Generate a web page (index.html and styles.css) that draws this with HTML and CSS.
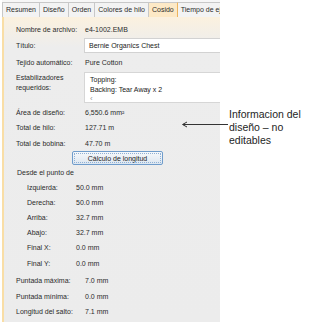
FILE: index.html
```html
<!DOCTYPE html>
<html lang="es">
<head>
    <meta charset="UTF-8">
    <title>Cosido</title>
    <link rel="stylesheet" href="styles.css">
</head>
<body>
    <div class="panel">
        <!-- Tab strip -->
        <div class="tabs">
            <div class="tab">Resumen</div>
            <div class="tab">Diseño</div>
            <div class="tab">Orden</div>
            <div class="tab">Colores de hilo</div>
            <div class="tab active">Cosido</div>
            <div class="tab last">Tiempo de ejecución</div>
        </div>

        <div class="pane">
            <div class="row h16">
                <span class="label">Nombre de archivo:</span>
                <span class="value">e4-1002.EMB</span>
            </div>
            <div class="row h17">
                <span class="label">Título:</span>
                <div class="input">Bernie Organics Chest</div>
            </div>
            <div class="row h16">
                <span class="label">Tejido automático:</span>
                <span class="value">Pure Cotton</span>
            </div>
            <div class="row stab">
                <span class="label">Estabilizadores<br>requeridos:</span>
                <div class="listbox">
                    <div>Topping:</div>
                    <div>Backing: Tear Away x 2</div>
                    <div class="scroll">&lsaquo;</div>
                </div>
            </div>
            <div class="row h16">
                <span class="label">Área de diseño:</span>
                <span class="value">6,550.6 mm²</span>
            </div>
            <div class="row h15">
                <span class="label">Total de hilo:</span>
                <span class="value">127.71 m</span>
            </div>
            <div class="row h16">
                <span class="label">Total de bobina:</span>
                <span class="value">47.70 m</span>
            </div>
            <div class="button-row">
                <button class="btn">Cálculo de longitud</button>
            </div>
            <div class="row h15 from">Desde el punto de</div>
            <div class="row h15 sub">
                <span class="label">Izquierda:</span>
                <span class="value">50.0 mm</span>
            </div>
            <div class="row h15 sub">
                <span class="label">Derecha:</span>
                <span class="value">50.0 mm</span>
            </div>
            <div class="row h15 sub">
                <span class="label">Arriba:</span>
                <span class="value">32.7 mm</span>
            </div>
            <div class="row h15 sub">
                <span class="label">Abajo:</span>
                <span class="value">32.7 mm</span>
            </div>
            <div class="row h15 sub">
                <span class="label">Final X:</span>
                <span class="value">0.0 mm</span>
            </div>
            <div class="row h17 sub">
                <span class="label">Final Y:</span>
                <span class="value">0.0 mm</span>
            </div>
            <div class="row h16">
                <span class="label">Puntada máxima:</span>
                <span class="value">7.0 mm</span>
            </div>
            <div class="row h16">
                <span class="label">Puntada mínima:</span>
                <span class="value">0.0 mm</span>
            </div>
            <div class="row h15">
                <span class="label">Longitud del salto:</span>
                <span class="value">7.1 mm</span>
            </div>
        </div>
    </div>

    <!-- Callout note -->
    <div class="callout">
        <svg class="arrow" width="46" height="7" viewBox="0 0 46 7">
            <line x1="1" y1="3.5" x2="46" y2="3.5" stroke="#333" stroke-width="1"/>
            <path d="M5 1 L0.5 3.5 L5 6" fill="none" stroke="#333" stroke-width="1"/>
        </svg>
        <div class="note">Informacion del<br>diseño – no<br>editables</div>
    </div>
</body>
</html>
```

FILE: styles.css
```css
* {
    margin: 0;
    padding: 0;
    box-sizing: border-box;
}

body {
    font-family: 'Liberation Sans', Arial, sans-serif;
    background: #fff;
    display: flex;
    align-items: flex-start;
}

/* Dialog panel */
.panel {
    width: 218px;
    margin-left: 2px;
    height: 322px;
    display: flex;
    flex-direction: column;
    font-size: 7px;
    color: #2b2b2b;
}

.tabs {
    display: flex;
    height: 17px;
    padding-top: 2px;
    background: #f7f7f7;
    overflow: hidden;
}

.tab {
    flex-shrink: 0;
    padding: 0 3px;
    height: 15px;
    line-height: 13px;
    border: 1px solid #c8c8c8;
    border-bottom: none;
    border-left: none;
    background: #f3f3f3;
    white-space: nowrap;
}

.tab:first-child {
    border-left: 1px solid #c8c8c8;
}

.tab.active {
    background: #fde9c6;
    border-right: 1px solid #eeb45c;
}

.pane {
    flex: 1;
    background: linear-gradient(to bottom, #fbf1df 0, #ededed 30px, #ececec 100%);
    border-left: 2px solid #f9dea6;
    padding-top: 4px;
}

.row {
    display: flex;
    align-items: center;
    padding-left: 12px;
}

.h15 { height: 15px; }
.h16 { height: 16px; }
.h17 { height: 17px; }

.label {
    width: 68px;
    flex-shrink: 0;
}

.value {
    padding-left: 1px;
}

.input {
    flex: 1;
    height: 15px;
    line-height: 13px;
    background: #fff;
    border: 1px solid #d2d2d2;
    border-right: none;
    padding-left: 4px;
    color: #222;
}

.stab {
    height: 34px;
    align-items: flex-start;
    padding-top: 2px;
}

.stab .label {
    line-height: 10px;
    padding-top: 1px;
}

.listbox {
    flex: 1;
    height: 31px;
    background: #fff;
    border: 1px solid #d6d6d6;
    border-right: none;
    padding: 2px 0 0 5px;
    line-height: 10px;
    color: #222;
}

.listbox .scroll {
    line-height: 8px;
    color: #999;
    font-size: 8px;
}

.button-row {
    height: 14px;
    padding-left: 68px;
}

.btn {
    width: 91px;
    height: 14px;
    font-family: inherit;
    font-size: 7px;
    color: #222;
    background: linear-gradient(to bottom, #f6f8fb, #dde6f0);
    border: 1px solid #6f9ccb;
    border-radius: 2px;
    outline: 1px dotted #8fb0d4;
    outline-offset: -3px;
}

.from {
    padding-left: 13px;
}

.sub {
    padding-left: 23px;
}

.sub .label {
    width: 48px;
}

/* Callout */
.callout {
    display: flex;
    align-items: flex-start;
    margin-top: 108px;
}

.arrow {
    margin-left: -38px;
    margin-top: 13px;
    flex-shrink: 0;
}

.note {
    font-size: 10.5px;
    line-height: 13px;
    color: #1e1e1e;
    padding-left: 1px;
}
```
